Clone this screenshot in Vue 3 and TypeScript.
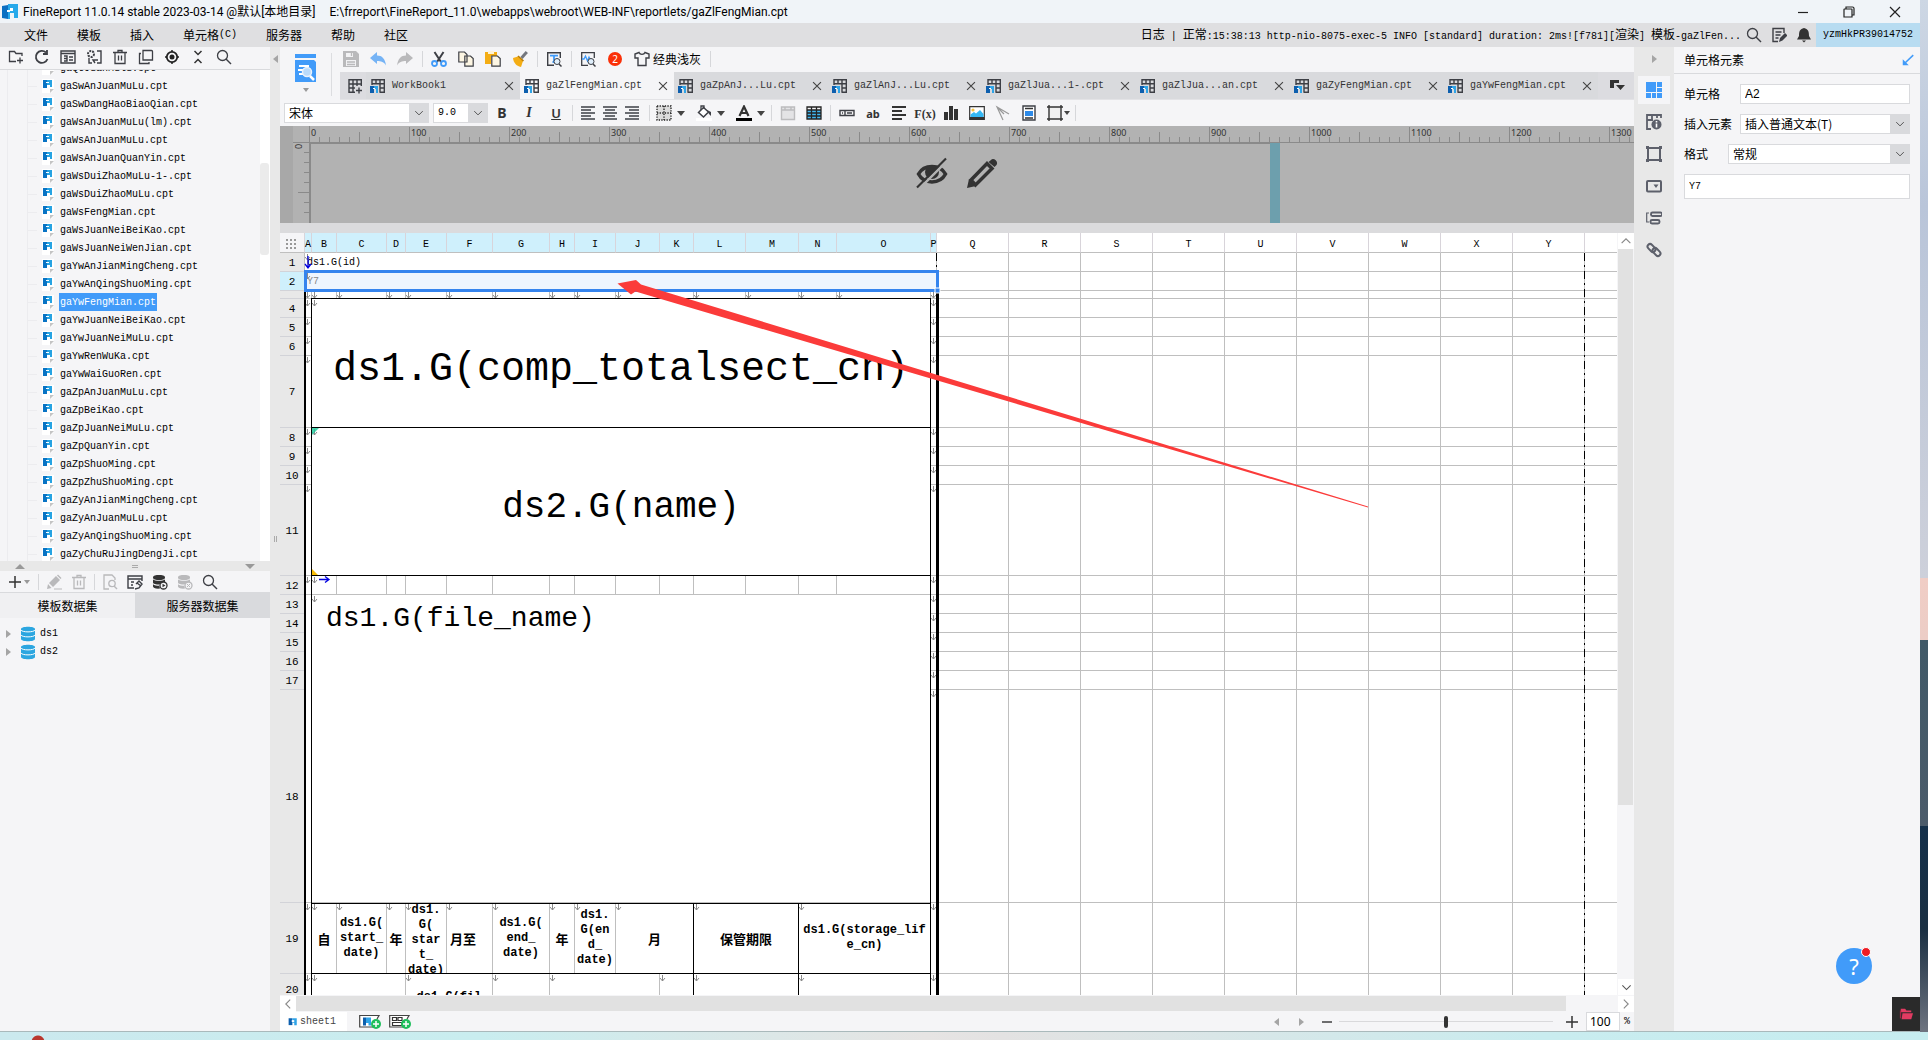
<script setup lang="ts">
import { defineComponent, h, ref } from 'vue'

const ink = '#3d3f45'
const gridGlyph = `<path fill="none" stroke="${ink}" stroke-width="1.4" d="M2 7V1.7h12.3v12.6H9.5M2 5.7h12.3M6 1.7v4M10 1.7v12.6M10 10h4.300"/>`
const logoGlyph = '<path fill="#0d5fae" d="M0 7h4v7H0z"/><path fill="#2fa4e7" d="M4 7h4v7H6v-4H4z"/><path fill="#fff" d="M3 9h2v1H3z"/>'
const dbBase = (c: string) => `<g fill="${c}"><path d="M1 3.500C1 1.500 4 1 7 1s6 .5 6 2.500S10 6 7 6 1 5.500 1 3.500z"/><path d="M1 5.500C3 7.200 11 7.200 13 5.500V8C10 8.500 8 9.500 7.500 10.500 4 10.500 1 10 1 8.500z"/><path d="M1 10.200c1 1 4 1.500 6.300 1.500.1 1.200.4 2 1 2.800C4 15 1 14 1 12.500z"/></g>`

const icons: Record<string, string> = {
  logo: '<path fill="#0a6fc2" d="M0 2l6-1v14l-6-1z"/><path fill="#27a9ea" d="M6 0h10v14h-4V9H8v6H6z"/><path fill="#fff" d="M8 4h3v3H8zM5 6h3v2H5z"/>',
  newdir: `<path fill="none" stroke="${ink}" stroke-width="1.3" d="M14 7V4.500H8L6.500 2.500H1.500v10H8M12 8.500v6M9 11.500h6"/>`,
  refresh: `<path fill="none" stroke="${ink}" stroke-width="1.8" d="M13.500 10A6 6 0 1 1 12 3.500M13 1v4H9"/>`,
  rename: `<path fill="none" stroke="${ink}" stroke-width="1.4" d="M1 2h14v12H1zM1 4.500h14M4 7h3v5H4M4 9.500h3M9 8h4M9 11h4"/>`,
  config: `<path fill="none" stroke="${ink}" stroke-width="1.4" d="M11 2h4v12h-4M3 9v5h3M9 14l-2-3h5"/><circle cx="5" cy="5" r="3" fill="none" stroke="${ink}" stroke-width="2" stroke-dasharray="2 1"/>`,
  trash: `<path fill="none" stroke="currentColor" stroke-width="1.3" d="M1 3.500h14M6 3V1.500h4V3M3 3.500v11h10v-11M6.500 6.500v5M9.500 6.500v5"/>`,
  pages: `<path fill="none" stroke="${ink}" stroke-width="1.300" d="M5 1.500h8.500q1 0 1 1V11H5zM3 4.500H1.500V14.500H11V13"/>`,
  target: '<circle cx="8" cy="8" r="5.200" fill="none" stroke="#222" stroke-width="1.800"/><circle cx="8" cy="8" r="2.500" fill="#222"/><path stroke="#222" stroke-width="1.500" d="M8 1v2M8 13v2M1 8h2M13 8h2"/>',
  collapse: '<path fill="none" stroke="#333" stroke-width="1.500" d="M4.500 2L8 5.500 11.500 2M4.500 14L8 10.500 11.500 14"/>',
  search: `<circle cx="6.500" cy="6.500" r="5" fill="none" stroke="${ink}" stroke-width="1.300"/><path stroke="${ink}" stroke-width="1.400" d="M10 10l5 5"/>`,
  file: '<path fill="#fff" d="M2 1h12v11l-3 3H2z"/><path fill="#c4c4c4" d="M14 11l-4 4v-4z"/><path fill="#0873c4" d="M3 2h4v8H3z"/><path fill="#27a3e2" d="M7 2h5v7h-2V7H7z"/><path fill="#fff" d="M6 4h3v1H6z"/>',
  sheet: '<path fill="#0d5fae" d="M1 2h6v11H1z"/><path fill="#2fa4e7" d="M7 2h7v11h-4V9H7z"/><path fill="#fff" d="M6 5h4v3H6z"/>',
  big: '<path fill="#419bf9" d="M0 0h21v4H0zM0 6h19l2 2v20H0z"/><path stroke="#fff" stroke-width="2" d="M4 12h10M3 16h5M4 20h4"/><circle cx="12" cy="18" r="4.500" fill="#b9dafa" stroke="#e9f1fb" stroke-width="1.500"/><path stroke="#fff" stroke-width="2.500" d="M15 22l4 4"/>',
  save: '<path fill="#b9b9bb" d="M0 0h13l3 3v13H0z"/><path fill="#f2f2f4" d="M3 2h7v4H3zM3 9h10v6H3z"/><path stroke="#b9b9bb" stroke-width="1.300" d="M4 11h8M4 13.500h8M8.500 2v3"/>',
  undo: '<path fill="#75b3f5" d="M0 7l7-6v3.500c5 0 8 3 9 10-2-3.500-5-4.500-9-4.500V13z"/>',
  redo: '<path fill="#b9b9bb" d="M16 7L9 1v3.500c-5 0-8 3-9 10C2 11 5 10 9 10v3z"/>',
  cut: `<path stroke="${ink}" stroke-width="2" d="M3.500 1l6.500 10M12.500 1L6 11"/><circle cx="3.500" cy="12.500" r="2.500" fill="none" stroke="#419bf9" stroke-width="1.800"/><circle cx="12.500" cy="12.500" r="2.500" fill="none" stroke="#419bf9" stroke-width="1.800"/>`,
  copy: `<path fill="#fdf6e3" stroke="${ink}" stroke-width="1.200" d="M.8 1h5.700L9 3.500V11H.8zM6.800 5h5.700L15.200 7.500V15.200H6.800z"/>`,
  paste: `<path fill="#f4ad14" d="M0 1h12v4H6v8H0z"/><path fill="#fff3d4" d="M3 0h6v3H3z"/><path fill="#fdf6e3" stroke="${ink}" stroke-width="1.200" d="M6.800 5h5.700L15.200 7.500V15.200H6.800z"/>`,
  brush: `<path stroke="#74777e" stroke-width="3" d="M9.500 7L14.800 1"/><path fill="#f4ad14" d="M1 7l5-1.500L11 10l-2 6c-5-1-7.500-4.500-8-9z"/><path stroke="#b97b00" stroke-width="1.500" d="M6 5l5.500 5"/>`,
  find: `<path fill="none" stroke="${ink}" stroke-width="1.400" d="M8 14.300H1.700V1.700h12.600V7"/><path stroke="#419bf9" stroke-width="1.800" d="M4 4.700h8M8 4.700V11M6.500 11h3"/><circle cx="11" cy="10.500" r="3" fill="#dfeefb" stroke="${ink}"/><path stroke="${ink}" stroke-width="1.500" d="M13 13l2.500 2.500"/>`,
  wave: `<path fill="none" stroke="${ink}" stroke-width="1.300" d="M8 14.300H1.700V1.700h12.600V7"/><path fill="none" stroke="#419bf9" stroke-width="1.300" d="M2 8h2l1.500-3L7.500 10 9 6l1 2"/><circle cx="11" cy="10.500" r="3" fill="#dfeefb" stroke="${ink}"/><path stroke="${ink}" stroke-width="1.500" d="M13 13l2.500 2.500"/>`,
  shirt: `<path fill="none" stroke="${ink}" stroke-width="1.400" d="M5 1.500L1 3v4h3v7.500h8V7h3V3l-4-1.500C10 4 6 4 5 1.500z"/>`,
  newtab: `<path fill="none" stroke="${ink}" stroke-width="1.400" d="M8 14.300H2V1.700h12.300V8M2 6h12.300M2 10h6M6 1.700v12.600M10 1.700V8M12 9.500v6M9 12.500h6"/>`,
  book: gridGlyph + `<g transform="translate(0 1)">${logoGlyph}</g>`,
  close: '<path stroke="#444" stroke-width="1.300" d="M3.500 3.500l9 9M12.500 3.500l-9 9"/>',
  more: '<path fill="#333" d="M1 2h9v3H5v5H1zM7 7h9l-4.500 5z"/>',
  left: `<path stroke="${ink}" stroke-width="1.500" d="M1 2h14M1 5h10M1 8h14M1 11h10M1 14h14"/>`,
  center: `<path stroke="${ink}" stroke-width="1.500" d="M1 2h14M3 5h10M1 8h14M3 11h10M1 14h14"/>`,
  right: `<path stroke="${ink}" stroke-width="1.500" d="M1 2h14M5 5h10M1 8h14M5 11h10M1 14h14"/>`,
  border: '<path fill="#dcdcdc" d="M1 1h14v14H1z"/><path fill="none" stroke="#222" stroke-width="1.300" stroke-dasharray="1.300 1.300" d="M1 1h14v14H1zM8 1v14M1 8h14"/>',
  fill: `<path fill="#fff" stroke="${ink}" stroke-width="1.500" d="M2.500 7.500l5-5 5 4.500-5 5z"/><path fill="none" stroke="${ink}" stroke-width="1.300" d="M5 5V1h3v3"/><path fill="${ink}" d="M11 5l4 2v4l-2-2z"/><path fill="#fff" d="M0 13h16v3H0z"/>`,
  color: '<path fill="none" stroke="#333" stroke-width="2.200" d="M3.500 11L8 1.500 12.500 11M5 8h6"/><path fill="#000" d="M0 13h16v3H0z"/>',
  merge: '<path fill="#e3e3e5" stroke="#bcbcbe" stroke-width="1.400" d="M1.500 2h13v12.500h-13zM1.500 5h13M5 2v3M11 2v3"/>',
  cells: '<path fill="#41b7f0" d="M1 5h14v9H1z"/><path fill="none" stroke="#222" stroke-width="1.300" d="M1 2h14v12H1zM1 5h14M1 8h14M1 11h14M5.500 2v12M10.500 2v12"/>',
  field: `<path fill="none" stroke="${ink}" stroke-width="1.400" d="M1 5.500h14v5H1zM6 5.500v5M3 8h1M8 8h5"/>`,
  lines: '<path stroke="#333" stroke-width="2" d="M1 2h14M1 6h10M1 10h14M1 14h10"/>',
  bars: '<path fill="#333" d="M1 7h4v8H1zM6 1h4v14H6zM11 4h4v11h-4z"/>',
  image: '<path fill="#fff" stroke="#333" stroke-width="1.200" d="M.7 1.700h14.600v12.600H.7z"/><path fill="#35b8f5" d="M1.500 12V9.500L5 7l2 1.500L11 5l3.500 4V12z"/><circle cx="4" cy="5" r="1.600" fill="#f6c244"/><path fill="#333" d="M.5 12h15v2.500H.5z"/>',
  pointer: '<path fill="none" stroke="#999" stroke-width="1.200" d="M8 15L2 2l12 7M2 2l7 7"/>',
  doc: `<path fill="#fff" stroke="${ink}" stroke-width="1.400" d="M2 1h12v14H2z"/><path stroke="#333" stroke-width="1.300" d="M4 3.500h8M4 13h8"/><path fill="#2d8ae8" d="M4 6h8v5H4z"/><path stroke="#fff" d="M4 5.500h8"/>`,
  rect: '<path fill="#f0f0f0" stroke="#333" stroke-width="1.400" d="M2 2h12v12H2zM0 2h16M0 14h16M2 0v16M14 0v16"/>',
  pencil: '<path fill="#b9b9bb" d="M1 15l1-5 3.500 4zM3 9l7-7 4 4-7 7zM11 1.500l1-1 3.500 3.500-1 1z"/><path stroke="#b9b9bb" d="M8 15h8"/>',
  page: '<path fill="none" stroke="#b9b9bb" stroke-width="1.300" d="M13 6V4l-3-3H2v14h5"/><circle cx="10" cy="9.500" r="3.200" fill="none" stroke="#b9b9bb" stroke-width="1.300"/><path stroke="#b9b9bb" stroke-width="1.400" d="M12 12l3 3"/>',
  dsedit: `<path fill="none" stroke="${ink}" stroke-width="1.400" d="M15 7V2H1v12h6M1 5h14M4 8h3M4 11h2"/><path fill="none" stroke="${ink}" stroke-width="1.400" d="M9 10l3-3 3 3-3 4-4 1M10 9l4 3"/>`,
  dbplay: dbBase('#333') + '<circle cx="11.500" cy="11.500" r="3.500" fill="#f5f5f7" stroke="#333" stroke-width="1.300"/><path fill="#333" d="M10.500 9.700l3 1.800-3 1.800z"/>',
  dbstop: dbBase('#b9b9bb') + '<circle cx="11.500" cy="11.500" r="3.500" fill="#f5f5f7" stroke="#b9b9bb" stroke-width="1.300"/><path stroke="#b9b9bb" d="M10 10l3 3M13 10l-3 3"/>',
  db: '<path fill="#2ca6e0" d="M1 3c0-3 14-3 14 0v10c0 3-14 3-14 0z"/><path fill="none" stroke="#fff" d="M1 4c1 2.500 13 2.500 14 0M1 9c1 2.500 13 2.500 14 0"/>',
  eyeoff: '<path fill="none" stroke="#333" stroke-width="3.500" d="M2.500 17C8 7 24 7 29.500 17 24 27.500 8 27.500 2.500 17z"/><circle cx="16" cy="15" r="7" fill="#333"/><path stroke="#b2b2b2" stroke-width="2.500" d="M3 32L32 3"/><path stroke="#333" stroke-width="2.200" d="M1 30.500L30 1.500"/>',
  edit: '<path fill="#333" d="M1 31l2-9 7 7zM25 3c2-3 8 1 5.500 5l-2 2-6-5z"/><path fill="none" stroke="#333" stroke-width="3.500" d="M5 23L21 6.500l5 5L9.500 28z"/>',
  cellel: '<path fill="#419bf9" d="M0 0h10v10H0zM11 0h5v5h-5zM11 6h5v4h-5zM0 11h5v5H0zM6 11h4v5H6zM11 11h5v5h-5z"/>',
  cellattr: '<path fill="none" stroke="#5d606b" stroke-width="1.800" d="M5 15H1V1h14v3M1 6h6M6 1v4M11 1v3"/><circle cx="10.500" cy="10.500" r="5" fill="#5d606b"/><path stroke="#fff" stroke-width="1.600" d="M10.500 7v1.500M10.500 9.500v4"/>',
  frame: '<path fill="none" stroke="#5d606b" stroke-width="2" d="M2 2h12v12H2z"/><path fill="#5d606b" d="M0 0h3v3H0zM13 0h3v3h-3zM0 13h3v3H0zM13 13h3v3h-3z"/>',
  widget: '<rect x="1" y="3" width="14" height="10.500" rx="1" fill="none" stroke="#5d606b" stroke-width="2"/><path fill="#5d606b" d="M7.500 6.500h5l-2.500 3.500z"/>',
  cond: '<path fill="none" stroke="#5d606b" stroke-width="1.200" d="M3 3H.7v9H3"/><rect x="5" y="2.500" width="11" height="3.500" rx="1.500" fill="none" stroke="#5d606b" stroke-width="1.900"/><rect x="4.500" y="10" width="9" height="3.500" rx="1.500" fill="none" stroke="#5d606b" stroke-width="1.900"/>',
  link: '<g fill="none" stroke="#5d606b" stroke-width="2"><rect x="1" y="3.500" width="9" height="5" rx="2.500" transform="rotate(45 5.500 6)"/><rect x="6" y="7.500" width="9" height="5" rx="2.500" transform="rotate(45 10.500 10)"/></g>',
  note: `<path fill="none" stroke="${ink}" stroke-width="1.400" d="M13 6V1.500H2v13h5M4.500 5h6M4.500 8h5M4.500 11h3"/><path fill="${ink}" d="M8 15l1-4 5-5 2.500 2.500-5 5z"/>`,
  bell: '<path fill="#333" d="M8 1c4 1 5 3 5 8l2 3.500H1L3 9c0-5 1-7 5-8zM6 13.500h4L8 15.500z"/>',
  min: '<path stroke="#222" stroke-width="1.200" d="M3 8.500h10"/>',
  restore: '<path fill="none" stroke="#222" stroke-width="1.200" d="M3 5.500q0-.5.500-.5h7q.5 0 .5.500v7.500H3zM5 5V3h6.500Q13 3 13 4.500V11h-2"/>',
  quit: '<path stroke="#222" stroke-width="1.200" d="M3 3l10 10M13 3L3 13"/>',
  dock: '<path fill="#419bf9" d="M1 15V7l8 8z"/><path stroke="#419bf9" stroke-width="2" d="M4 12L15 1.500"/>',
  minus: '<path stroke="#333" stroke-width="1.400" d="M3 8h10"/>',
  plus: '<path stroke="#333" stroke-width="1.500" d="M2 8h12M8 2v12"/>',
  up: '<path fill="none" stroke="#888" stroke-width="1.300" d="M3 10.500l5-5 5 5"/>',
  down: '<path fill="none" stroke="#555" stroke-width="1.600" d="M2 5l6 6 6-6"/>',
  prev: '<path fill="none" stroke="#888" stroke-width="1.300" d="M10.500 3l-5 5 5 5"/>',
  next: '<path fill="none" stroke="#888" stroke-width="1.300" d="M5.500 3l5 5-5 5"/>',
  addsheet: '<path fill="#fff" stroke="#444" stroke-width="1.200" d="M14 13H.7V1.500H20L18 5"/><path fill="#0d5fae" d="M4 3.500h3v8H4z"/><path fill="#2fa4e7" d="M7 3.500h5v8H9.500V9H7z"/><circle cx="17" cy="10" r="5" fill="#1fbf5c"/><path stroke="#fff" stroke-width="1.500" d="M14 10h6M17 7v6"/>',
  addpoly: '<path fill="#fff" stroke="#444" stroke-width="1.200" d="M14 13H.7V1.500H20L18 5"/><path fill="none" stroke="#333" stroke-width="1.200" d="M3.500 3.500h4v3h-4zM9 3.500h4v3H9zM3.500 8.500H13v3H3.500z"/><circle cx="17" cy="10" r="5" fill="#1fbf5c"/><path stroke="#fff" stroke-width="1.500" d="M14 10h6M17 7v6"/>',
  folder: '<path fill="#e23b62" d="M2 2h5l1.500 2H14v2H2z"/><path fill="#e23b62" d="M4 7h12l-2 7H3z"/><path fill="#a02545" d="M1 4h1.500v9H1z"/>',
}

const Icon = defineComponent({
  props: { name: { type: String, required: true }, box: { type: String, default: '0 0 16 16' } },
  setup: (p) => () => h('svg', { class: 'ic', viewBox: p.box, 'aria-hidden': 'true', innerHTML: icons[p.name] }),
})

const menus = ['文件', '模板', '插入', '单元格', '服务器', '帮助', '社区']
const treeTools = ['newdir', 'refresh', 'rename', 'config', 'trash', 'pages', 'target', 'collapse', 'search']
const files = [
  'gaQtJuanMulu', 'gaSwAnJuanMuLu', 'gaSwDangHaoBiaoQian', 'gaWsAnJuanMuLu(lm)', 'gaWsAnJuanMuLu', 'gaWsAnJuanQuanYin',
  'gaWsDuiZhaoMuLu-1-', 'gaWsDuiZhaoMuLu', 'gaWsFengMian', 'gaWsJuanNeiBeiKao', 'gaWsJuanNeiWenJian', 'gaYwAnJianMingCheng',
  'gaYwAnQingShuoMing', 'gaYwFengMian', 'gaYwJuanNeiBeiKao', 'gaYwJuanNeiMuLu', 'gaYwRenWuKa', 'gaYwWaiGuoRen',
  'gaZpAnJuanMuLu', 'gaZpBeiKao', 'gaZpJuanNeiMuLu', 'gaZpQuanYin', 'gaZpShuoMing', 'gaZpZhuShuoMing',
  'gaZyAnJianMingCheng', 'gaZyAnJuanMuLu', 'gaZyAnQingShuoMing', 'gaZyChuRuJingDengJi',
].map((n) => n + '.cpt')
const current = ref('gaYwFengMian.cpt')

const mainTools = ['save', 'undo', 'redo', '|', 'cut', 'copy', 'paste', 'brush', '|', 'find', '|', 'wave']
const tabs = ['WorkBook1', 'gaZlFengMian.cpt', 'gaZpAnJ...Lu.cpt', 'gaZlAnJ...Lu.cpt', 'gaZlJua...1-.cpt', 'gaZlJua...an.cpt', 'gaZyFengMian.cpt', 'gaYwFengMian.cpt']
const activeTab = ref(1)
const rail = ['cellel', 'cellattr', 'frame', 'widget', 'cond', 'link']

const hticks = Array.from({ length: 200 }, (_, i) => i)
const vticks = [1, 2, 3, 4, 5, 6, 7]

const colWidths = [7, 25, 50, 19, 41, 46, 57, 25, 41, 44, 34, 52, 53, 38, 94, 6, ...Array(9).fill(72)] as number[]
const letters = 'ABCDEFGHIJKLMNOPQRSTUVWXY'.split('')
const rowHeights = [19, 19, 8, 19, 19, 19, 72, 19, 19, 19, 91, 19, 19, 19, 19, 19, 19, 213, 71, 32]

interface Cell { span?: number; rows?: number; cls?: string; lines?: string[]; cjk?: boolean }
const many = (n: number): Cell[] => Array.from({ length: n }, () => ({}))
const rest = many(10)
const edge = (): Cell[] => [{}, {}, ...rest]
const cells: Cell[][] = [
  [{ span: 16, cls: 'small', lines: ['ds1.G(id)'] }, ...rest],
  [{ span: 16, cls: 'small sel', lines: ['Y7'] }, ...rest],
  [...many(16), ...rest],
  [{}, { span: 14, rows: 4, cls: 'huge', lines: ['ds1.G(comp_totalsect_cn)'] }, {}, ...rest],
  edge(), edge(), edge(),
  [{}, { span: 14, rows: 4, cls: 'large', lines: ['ds2.G(name)'] }, {}, ...rest],
  edge(), edge(), edge(),
  [...many(16), ...rest],
  [{ rows: 6 }, { span: 14, rows: 6, cls: 'medium', lines: ['ds1.G(file_name)'] }, {}, ...rest],
  [{}, ...rest], [{}, ...rest], [{}, ...rest], [{}, ...rest], [{}, ...rest],
  [
    {}, { cjk: true, lines: ['自'] }, { lines: ['ds1.G(', 'start_', 'date)'] }, { cjk: true, lines: ['年'] },
    { lines: ['ds1.', 'G(', 'star', 't_', 'date)'] }, { cjk: true, lines: ['月至'], cls: 'near' }, { lines: ['ds1.G(', 'end_', 'date)'] },
    { cjk: true, lines: ['年'] }, { lines: ['ds1.', 'G(en', 'd_', 'date)'] }, { span: 2, cjk: true, lines: ['月'] },
    { span: 2, cjk: true, lines: ['保管期限'] }, { span: 2, lines: ['ds1.G(storage_lif', 'e_cn)'] }, {}, ...rest,
  ],
  [{}, { span: 3 }, { span: 2, cls: 'low', lines: ['ds1.G(fil'] }, {}, { span: 3 }, {}, { span: 2 }, { span: 2 }, {}, ...rest],
]

/* column and row origins inside the sheet, after the 25px row header and 20px column header */
const xs = colWidths.reduce<number[]>((a, w) => [...a, a[a.length - 1] + w], [25])
const ys = rowHeights.reduce<number[]>((a, w) => [...a, a[a.length - 1] + w], [20])
const markRows: Record<number, string> = {
  1: 'A', 2: 'A', 3: 'ABCDEFGHIJKLMNOP', 4: 'ABP', 5: 'AP', 6: 'AP', 7: 'AP', 8: 'ABP', 9: 'AP', 10: 'AP', 11: 'AP', 12: 'ABP',
  13: 'BP', 14: 'P', 15: 'P', 16: 'P', 17: 'P', 18: 'P', 19: 'ABCDEFGHIJLNP', 20: 'ABEGHKLNP',
}
const marks = Object.entries(markRows).flatMap(([r, cols]) =>
  cols.split('').map((c) => `M${xs[letters.indexOf(c)] + 2.5} ${ys[+r - 1] + 1}v6m-2.500 -3l2.500 3l2.500 -3`),
).join('')

const zoomLevel = ref(50)
</script>

<template>
  <div class="desk">
    <div class="upper">
      <div class="app">
        <header class="title">
          <Icon name="logo" />
          <span>FineReport 11.0.14 stable 2023-03-14 @默认[本地目录]</span>
          <span class="path">E:\frreport\FineReport_11.0\webapps\webroot\WEB-INF\reportlets/gaZlFengMian.cpt</span>
          <span class="grow"></span>
          <button v-for="b in ['min', 'restore', 'quit']" :key="b" class="win" :aria-label="b"><Icon :name="b" /></button>
        </header>

        <nav class="menu">
          <button v-for="m in menus" :key="m">{{ m }}<span v-if="m === '单元格'" class="lat">(C)</span></button>
          <span class="grow"></span>
          <p class="log">日志<span class="lat">&nbsp;|&nbsp;</span>正常<span class="lat">:15:38:13 http-nio-8075-exec-5 INFO [standard] duration: 2ms![f781][</span>渲染<span class="lat">] </span>模板<span class="lat">-gaZlFen...</span></p>
          <div class="tray">
            <button v-for="b in ['search', 'note', 'bell']" :key="b" :aria-label="b"><Icon :name="b" /></button>
          </div>
          <span class="user">yzmHkPR39014752</span>
        </nav>

        <div class="work">
          <aside class="left">
            <div class="tools tree-tools">
              <button v-for="t in treeTools" :key="t" :aria-label="t"><Icon :name="t" /></button>
            </div>
            <div class="tree">
              <ul>
                <li v-for="f in files" :key="f" :class="{ on: f === current }" @click="current = f">
                  <Icon name="file" /><span>{{ f }}</span>
                </li>
              </ul>
              <div class="tree-bar"><i></i></div>
            </div>
            <div class="splitter"><i class="tri-up"></i><i class="grip"></i><i class="tri-down"></i></div>
            <div class="tools ds-tools">
              <button aria-label="add"><Icon name="plus" /></button><i class="caret pale"></i>
              <i class="sep"></i>
              <button aria-label="edit"><Icon name="pencil" /></button>
              <button class="pale-ink" aria-label="delete"><Icon name="trash" /></button>
              <i class="sep"></i>
              <button v-for="t in ['page', 'dsedit', 'dbplay', 'dbstop', 'search']" :key="t" :aria-label="t"><Icon :name="t" /></button>
            </div>
            <div class="ds-tabs">
              <button class="on">模板数据集</button><button>服务器数据集</button>
            </div>
            <ul class="ds">
              <li v-for="d in ['ds1', 'ds2']" :key="d"><i class="tri-right"></i><Icon name="db" /><span>{{ d }}</span></li>
            </ul>
          </aside>

          <div class="divider"><i class="tri-left"></i><i class="grip2"></i></div>

          <main class="main">
            <div class="head">
              <button class="preview" aria-label="preview"><Icon name="big" box="0 0 21 28" /><i class="caret pale"></i></button>
              <i class="tall-sep"></i>
              <div class="head-right">
                <div class="tools row1">
                  <template v-for="(t, i) in mainTools" :key="i">
                    <i v-if="t === '|'" class="sep"></i>
                    <button v-else :aria-label="t"><Icon :name="t" /></button>
                  </template>
                  <button class="badge">2</button>
                  <button class="skin"><Icon name="shirt" />经典浅灰</button>
                  <i class="sep"></i>
                </div>
                <div class="tabs">
                  <button class="newtab" aria-label="new"><Icon name="newtab" /></button>
                  <div v-for="(t, i) in tabs" :key="t" class="tab" :class="{ on: i === activeTab }" @click="activeTab = i">
                    <Icon name="book" /><span>{{ t }}</span><button aria-label="close"><Icon name="close" /></button>
                  </div>
                  <button class="moretabs" aria-label="more"><Icon name="more" /></button>
                </div>
              </div>
            </div>

            <div class="tools row2">
              <div class="combo font"><select aria-label="font"><option>宋体</option></select><Icon name="down" /></div>
              <div class="combo size"><select aria-label="size"><option>9.0</option></select><Icon name="down" /></div>
              <div class="group biu">
                <button><b>B</b></button><button><em>I</em></button><button><u>U</u></button>
              </div>
              <i class="sep"></i>
              <div class="group tight">
                <button v-for="t in ['left', 'center', 'right']" :key="t" :aria-label="t"><Icon :name="t" /></button>
              </div>
              <i class="sep"></i>
              <div class="group drop">
                <template v-for="t in ['border', 'fill', 'color']" :key="t">
                  <button :aria-label="t"><Icon :name="t" /><i class="caret"></i></button>
                </template>
              </div>
              <i class="sep"></i>
              <div class="group wide">
                <button v-for="t in ['merge', 'cells']" :key="t" :aria-label="t"><Icon :name="t" /></button>
              </div>
              <i class="sep"></i>
              <div class="group wide">
                <button aria-label="field"><Icon name="field" /></button>
                <button class="word">ab</button>
                <button aria-label="lines"><Icon name="lines" /></button>
                <button class="word fx">F(x)</button>
                <button v-for="t in ['bars', 'image', 'pointer', 'doc']" :key="t" :aria-label="t"><Icon :name="t" /></button>
                <button class="rectbtn" aria-label="rect"><Icon name="rect" /><i class="caret tiny"></i></button>
              </div>
              <i class="sep"></i>
            </div>

            <div class="design">
              <svg class="ruler" aria-hidden="true">
                <rect width="13" height="97" fill="#a8a8a8" />
                <g fill="#8a8a8a">
                  <rect y="16" x="13" width="100%" height="1" />
                  <rect x="29" width="1" height="97" />
                  <rect v-for="t in hticks" :key="t" :x="29 + t * 10" :y="t % 10 === 0 ? 1 : t % 5 === 0 ? 6 : 11" :height="t % 10 === 0 ? 15 : t % 5 === 0 ? 10 : 5" width="1" />
                  <rect v-for="t in vticks" :key="'v' + t" :y="16 + t * 10" :x="t === 5 ? 18 : 24" :width="t === 5 ? 11 : 5" height="1" />
                  <rect x="30" y="17" width="961" height="1" />
                  <rect x="30" y="17" width="1" height="80" />
                </g>
                <rect x="990" y="17" width="10" height="80" fill="#6d9fad" />
                <g class="nums">
                  <text v-for="n in 14" :key="n" :x="(n - 1) * 100 + 31" y="10">{{ (n - 1) * 100 }}</text>
                  <text transform="translate(15 23) rotate(-90)" x="0" y="7">0</text>
                </g>
              </svg>
              <div class="veil-actions">
                <button aria-label="hide"><Icon name="eyeoff" box="0 0 32 32" /></button>
                <button aria-label="edit"><Icon name="edit" box="0 0 32 32" /></button>
              </div>
            </div>

            <div class="sheet-area">
              <div class="sheet">
                <table>
                  <colgroup>
                    <col class="c-head" />
                    <col v-for="(w, i) in colWidths" :key="i" :style="{ width: w + 'px' }" />
                    <col />
                  </colgroup>
                  <thead>
                    <tr>
                      <th class="corner"><svg viewBox="0 0 12 10"><path stroke="#999" stroke-width="2" stroke-dasharray="2 2" d="M0 1h11M0 5h11M0 9h11" /></svg></th>
                      <th v-for="(l, i) in letters" :key="l" :class="{ used: i < 16 }"><span>{{ l }}</span></th>
                      <th class="last"></th>
                    </tr>
                  </thead>
                  <tbody>
                    <tr v-for="(r, ri) in cells" :key="ri" :style="{ height: rowHeights[ri] + 'px' }">
                      <th :class="{ used: ri === 1 }"><template v-if="ri !== 2">{{ ri + 1 }}</template></th>
                      <td v-for="(c, ci) in r" :key="ci" :colspan="c.span" :rowspan="c.rows" :class="[c.cls, { cjk: c.cjk, txt: c.lines && !c.cls?.match(/small|huge|large|medium/), last: ci === r.length - 1 }]">
                        <div v-if="c.lines"><template v-for="(l, li) in c.lines" :key="li"><br v-if="li" />{{ l }}</template></div>
                      </td>
                    </tr>
                  </tbody>
                </table>
                <svg class="over" aria-hidden="true">
                  <path :d="marks" fill="none" stroke="#8a8a8a" />
                  <path d="M32 195h7l-7 7z" fill="#18c99a" opacity=".8" />
                  <path d="M32 336v6h6z" fill="#f8bd07" />
                  <path d="M28 23v11m-3-3l3 4 3-4M39 346.500h10m-4-3l4 3-4 3" fill="none" stroke="#0000e0" stroke-width="1.300" />
                  <g fill="#000">
                    <rect x="24" y="58" width="2" height="1200" />
                    <rect x="656" y="58" width="3" height="1200" />
                    <rect x="31" y="65" width="1" height="1200" />
                    <rect x="650" y="65" width="1" height="1200" />
                    <rect v-for="y in [65, 194, 342, 670, 740]" :key="y" x="31" :y="y" width="620" height="1" />
                    <rect v-for="x in [413, 518]" :key="x" :x="x" y="670" width="1" height="500" />
                  </g>
                  <path d="M1304.500 20v1200M656.500 20v18" stroke="#000" stroke-dasharray="8 4 2 4" />
                  <rect x="25.500" y="38.500" width="632" height="19" fill="none" stroke="#3584ee" stroke-width="3" />
                  <rect x="655" y="55" width="5" height="5" fill="#3584ee" stroke="#fff" stroke-width="1" />
                  <path d="M337.500 50.500L356 47l5 4.500L1088 273.500v1L355.500 58.500 351 61.500z" fill="#fb3b3a" />
                </svg>
              </div>
              <div class="vbar"><button aria-label="up"><Icon name="up" /></button><i></i><button aria-label="down"><Icon name="down" /></button></div>
            </div>

            <div class="hbar"><button aria-label="left"><Icon name="prev" /></button><i></i><button aria-label="right"><Icon name="next" /></button></div>

            <footer class="foot">
              <button class="sheet-tab"><Icon name="sheet" />sheet1</button>
              <button class="add" aria-label="add sheet"><Icon name="addsheet" box="0 0 22 16" /></button>
              <button class="add" aria-label="add poly"><Icon name="addpoly" box="0 0 22 16" /></button>
              <span class="grow"></span>
              <i class="tri-left nav"></i><i class="tri-right nav"></i>
              <button aria-label="zoom out"><Icon name="minus" /></button>
              <input v-model="zoomLevel" class="slide" type="range" aria-label="zoom" />
              <button aria-label="zoom in"><Icon name="plus" /></button>
              <input class="pct" value="100" aria-label="zoom percent" /><span class="lat unit">%</span>
            </footer>
          </main>

          <div class="rail">
            <i class="tri-right nav"></i>
            <button v-for="(r, i) in rail" :key="r" :class="{ on: i === 0 }" :aria-label="r"><Icon :name="r" /></button>
          </div>

          <aside class="props">
            <h2>单元格元素<Icon name="dock" /></h2>
            <div class="field"><label for="cell">单元格</label><input id="cell" value="A2" /></div>
            <div class="field"><label for="ins">插入元素</label><div class="combo"><select id="ins"><option>插入普通文本(T)</option></select><Icon name="down" /></div></div>
            <div class="field short"><label for="fmt">格式</label><div class="combo"><select id="fmt"><option>常规</option></select><Icon name="down" /></div></div>
            <input class="value" value="Y7" aria-label="value" />
          </aside>
        </div>
        <button class="help">?<i></i></button>
        <button class="tray-box" aria-label="folder"><Icon name="folder" /></button>
      </div>
      <div class="wall"></div>
    </div>
    <div class="taskbar"></div>
  </div>
</template>

<style>
body { margin: 0; }
</style>

<style scoped>
* { box-sizing: border-box; }
.desk {
  --bg: #f5f5f7;
  --mono: "Liberation Mono", "Noto Sans CJK SC", monospace;
  --cjk: "Noto Sans CJK SC", sans-serif;
  height: 100vh; display: flex; flex-direction: column; overflow: hidden;
  font: 12px/16px var(--cjk); color: #000; background: var(--bg);
}
button { border: 0; padding: 0; margin: 0; background: none; font: inherit; color: inherit; display: flex; align-items: center; justify-content: center; flex: none; }
ul { list-style: none; margin: 0; padding: 0; }
p, h2 { margin: 0; font: inherit; }
input, select { font: inherit; color: #000; margin: 0; outline: 0; border-radius: 0; }
.ic { width: 16px; height: 16px; display: block; flex: none; }
.grow { flex: 1; }
.lat { font-family: var(--mono); font-size: 10px; white-space: pre; }
.upper { flex: 1; display: flex; min-height: 0; }
.app { flex: 1; min-width: 0; display: flex; flex-direction: column; position: relative; border-bottom: 1px solid #a9b9bb; }
.wall { width: 8px; background: linear-gradient(#cdd7e4, #b9c5d9 20%, #cdd0da 56%, #f0cdc5 56%, #eccdc6 62%, #405967 62%, #4b5b6a 80%, #14304a 80%, #1a2f42 90%, #6e7480); }
.taskbar { height: 8px; background: radial-gradient(circle at 38px 10px, #b9372d 6px, transparent 7px), linear-gradient(90deg, #cbe9ee, #c9edef 25%, #e6e4e3 48%, #e3e2e2 52%, #c9ecef 80%, #c6edf0); }

.title { height: 23px; display: flex; align-items: center; padding-left: 2px; background: #f0f4f8; font: 12px/16px Roboto, "Noto Sans CJK SC", sans-serif; white-space: nowrap; }
.title .ic { margin-right: 5px; }
.title .path { margin-left: 14px; }
.title .win { width: 46px; height: 20px; }
.title .win .ic { margin: 0; }
.title .win:last-child { margin-right: 2px; }

.menu { height: 24px; background: #dfdfe1; display: flex; align-items: center; padding-left: 24px; white-space: nowrap; }
.menu > button { margin-right: 29px; }
.tray { display: flex; gap: 9px; margin: 0 4px 0 5px; }
.user { width: 104px; height: 24px; background: #b8dcf1; display: flex; align-items: center; justify-content: center; font: 10px/16px var(--mono); }

.work { flex: 1; display: flex; min-height: 0; }
.left { width: 270px; flex: none; display: flex; flex-direction: column; }
.tools { display: flex; align-items: center; flex: none; color: #3d3f45; }
.tools .ic { width: 16px; height: 16px; }
.sep { width: 1px; height: 16px; background: #d6d7da; flex: none; }
.tree-tools { height: 23px; padding: 0 8px 2px; gap: 10px; border-bottom: 1px solid #d9dadd; }
.tree { height: 491px; display: flex; overflow: hidden; flex: none; }
.tree ul { flex: 1; margin-top: -11px; background: linear-gradient(#ececef, #ececef) 7px 0 / 1px 100% no-repeat, linear-gradient(#ececef, #ececef) 27px 0 / 1px 100% no-repeat; }
.tree li { display: flex; align-items: center; height: 18px; padding-left: 40px; font: 10px/18px var(--mono); white-space: nowrap; background: linear-gradient(#ececef, #ececef) 28px 9px / 9px 1px no-repeat; }
.tree li span { margin-left: 3px; padding: 1px 1px 0; line-height: 17px; }
.tree li.on span { background: #419bf9; color: #fff; }
.tree-bar { width: 10px; background: #fff; }
.tree-bar i { display: block; margin-top: 93px; height: 92px; width: 9px; border-radius: 3px; background: #ebebeb; }
.splitter { height: 10px; background: #e8e8e8; display: flex; align-items: center; justify-content: space-between; padding: 0 15px; flex: none; }
.tri-up, .tri-down { border: 5px solid transparent; border-top-width: 0; border-bottom: 5px solid #999; }
.tri-down { border-bottom-width: 0; border-top: 5px solid #999; border-bottom-color: transparent; }
.grip { width: 6px; height: 3px; border: solid #aaa; border-width: 1px 0; }
.ds-tools { height: 22px; border-bottom: 1px solid #d9dadd; padding: 0 7px; gap: 9px; }
.ds-tools .caret { margin: 0 1px 0 -8px; }
.ds-tools .sep { margin: 0 -2px; }
.pale-ink { color: #b9b9bb; }
.caret { border: 4px solid transparent; border-top: 5px solid #444; border-bottom-width: 0; flex: none; }
.caret.pale { border-top-color: #999; border-left-width: 3px; border-right-width: 3px; border-top-width: 4px; }
.caret.tiny { border-left-width: 3px; border-right-width: 3px; border-top-width: 4px; }
.ds-tabs { display: flex; height: 25px; flex: none; }
.ds-tabs button { flex: 1; background: #d9dadd; }
.ds-tabs .on { background: #f0f0f2; }
.ds { padding-top: 7px; }
.ds li { display: flex; align-items: center; height: 18px; padding-left: 6px; font: 10px/18px var(--mono); }
.ds .ic { margin: 0 4px 0 9px; }
.tri-right { border: 4px solid transparent; border-left: 5px solid #a5a5a5; border-right-width: 0; }
.tri-left { border: 4px solid transparent; border-right: 5px solid #a5a5a5; border-left-width: 0; }

.divider { width: 10px; flex: none; background: #e8e8e8; display: flex; flex-direction: column; align-items: center; padding-top: 8px; }
.grip2 { margin-top: 473px; width: 3px; height: 6px; border: solid #aaa; border-width: 0 1px; }
.main { flex: 1; min-width: 0; display: flex; flex-direction: column; }
.head { display: flex; height: 53px; flex: none; }
.preview { width: 51px; flex-direction: column; justify-content: flex-start; padding-top: 7px; gap: 6px; }
.preview .ic { width: 21px; height: 28px; }
.tall-sep { width: 1px; margin: 6px 8px 4px 0; background: #dcdde0; }
.head-right { flex: 1; min-width: 0; }
.row1 { height: 25px; padding: 0 0 2px 3px; gap: 11px; }
.row1 .sep { margin: 0 -3px 0 -2px; }
.badge { width: 14px; height: 14px; border-radius: 7px; background: #fa3008; color: #fff; font: 10px/14px "Noto Sans", sans-serif; margin: 0 1px; }
.skin { gap: 3px; color: #000; }
.tabs { display: flex; height: 28px; background: #dcdce0; border-bottom: 1px solid #e3e3e6; color: #333; }
.newtab { width: 26px; padding-left: 3px; }
.tab { width: 154px; display: flex; align-items: center; padding: 0 4px; background: #d9dadd; font: 10px/16px var(--mono); cursor: default; }
.tab span { flex: 1; margin-left: 6px; padding-top: 1px; }
.tab.on { background: var(--bg); }
.newtab .ic, .tab .ic { width: 16px; height: 16px; }
.tab button .ic { width: 14px; height: 14px; }
.moretabs { margin-left: 11px; }
.row2 { height: 26px; padding-left: 4px; }
.combo { display: flex; align-items: stretch; height: 20px; border: 1px solid #d9dadd; background: #d9dadd; position: relative; }
.combo select { flex: 1; min-width: 0; appearance: none; border: 0; background: linear-gradient(90deg, #fff calc(100% - 19px), #d9dadd 0); padding: 0 22px 0 4px; }
.combo .ic { position: absolute; right: 4px; top: 4px; width: 10px; height: 10px; }
.font { width: 145px; margin-right: 4px; }
.size { width: 55px; }
.size select { font: 10px/16px var(--mono); }
.group { display: flex; align-items: center; }
.biu { gap: 11px; margin: 0 8px 0 6px; }
.biu button { width: 16px; font: 14px/18px "Noto Sans", sans-serif; color: #333; }
.biu em { font-family: "Liberation Serif", serif; font-weight: bold; }
.biu u { font-weight: 600; font-size: 13px; }
.tight { gap: 6px; margin: 0 9px 0 7px; }
.drop { gap: 11px; margin: 0 6px; }
.drop button { gap: 5px; width: 29px; justify-content: flex-start; }
.wide { gap: 10px; margin: 0 8px; }
.word { width: 16px; font: bold 11px/16px "Noto Sans", sans-serif; color: #333; padding-top: 1px; }
.fx { font: bold 12px/16px "Liberation Serif", serif; }
.rectbtn { gap: 1px; margin-right: -3px; }

.design { height: 97px; flex: none; background: #b2b2b2; position: relative; overflow: hidden; }
.ruler { position: absolute; inset: 0; width: 100%; height: 100%; }
.nums { font: 9px "Noto Sans", sans-serif; fill: #333; }
.veil-actions { position: relative; display: flex; justify-content: center; gap: 18px; padding-top: 31px; }
.veil-actions .ic { width: 32px; height: 32px; }

.sheet-area { flex: 1; min-height: 0; display: flex; border-top: 10px solid #dbdbdd; }
.sheet { flex: 1; min-width: 0; overflow: hidden; position: relative; background: #fff; }
table { width: 100%; table-layout: fixed; border-collapse: separate; border-spacing: 0; }
.c-head { width: 25px; }
th, td { padding: 0; border: solid #bfbfbf; border-width: 0 1px 1px 0; font-weight: normal; line-height: 1px; }
th { font: 10px/1px var(--mono); text-align: center; }
.last { border-right: 0; }
thead th { height: 20px; background: #fff; border-right-color: #d8d4da; padding-top: 3px; }
thead th span { display: flex; justify-content: center; }
thead .used { background: #cff0fc; }
thead .corner { background: var(--bg); }
.corner svg { width: 12px; height: 10px; display: block; margin: auto; }
tbody th { background: #e8e8e8; border-bottom-color: #d2d3d8; font-size: 11px; padding-top: 2px; }
tbody th.used { background: #cff0fc; }
.small { font: 10px/16px var(--mono); padding: 2px 0 0 2px; }
.sel { background: #eef5fe; color: #888; }
.huge { font: 40px/48px var(--mono); text-align: center; padding-top: 13px; }
.large { font: 36px/44px var(--mono); text-align: center; padding-top: 13px; }
.medium { font: 28px/48px var(--mono); padding-left: 14px; vertical-align: top; }
.txt { font: bold 12px/15px var(--mono); text-align: center; white-space: nowrap; }
.txt div { max-height: 70px; overflow: hidden; display: flow-root; }
.txt.cjk { font: bold 13px/15px var(--cjk); }
.txt.near { text-align: left; padding-left: 3px; }
.low { vertical-align: bottom; }
.over { position: absolute; inset: 0; width: 100%; height: 100%; }
.vbar { width: 17px; flex: none; display: flex; flex-direction: column; padding: 0 1px; }
.vbar button, .hbar button { background: #fff; width: 16px; height: 16px; }
.vbar .ic, .hbar .ic { width: 14px; height: 14px; }
.vbar i { background: #e1e1e1; flex: none; height: 73%; width: 15px; }
.vbar button:last-child { margin-top: auto; }
.vbar button:last-child .ic { width: 11px; height: 11px; }
.hbar { height: 17px; flex: none; display: flex; padding: 1px 0; }
.hbar i { background: #e1e1e1; width: calc(100% - 84px); margin-right: auto; }
.foot { height: 19px; flex: none; display: flex; align-items: center; }
.sheet-tab { width: 67px; height: 19px; background: #fff; font: 10px/16px var(--mono); color: #444; gap: 2px; padding-right: 3px; margin-right: 12px; }
.sheet-tab .ic { width: 10px; height: 12px; }
.add { margin-right: 8px; }
.add .ic { width: 22px; height: 16px; }
.foot .nav { margin-right: 20px; }
.foot .tri-right { margin-right: 15px; }
.slide { appearance: none; width: 214px; height: 12px; margin: 0 11px 0 4px; background: linear-gradient(#d9d9db, #d9d9db) 0 50% / 100% 1px no-repeat; }
.slide::-webkit-slider-thumb { appearance: none; width: 4px; height: 12px; border-radius: 2px; background: #333; }
.pct { width: 34px; height: 19px; margin: 0 4px 0 6px; border: 1px solid #d9dadd; padding: 0 3px; font: 12px/16px "Noto Sans", sans-serif; }
.unit { width: 10px; }

.rail { width: 40px; flex: none; background: #e8e8e8; display: flex; flex-direction: column; align-items: center; gap: 4px; padding-top: 8px; }
.rail .nav { margin-bottom: 9px; }
.rail button { width: 32px; height: 28px; }
.rail .on { background: var(--bg); }

.props { width: 246px; flex: none; padding: 0 10px; }
.props h2 { display: flex; justify-content: space-between; align-items: center; height: 27px; margin: 0 -10px 10px; padding: 0 6px 0 10px; border-bottom: 1px solid #d9dadd; }
.props h2 .ic { width: 12px; height: 12px; }
.field { display: flex; align-items: center; margin-bottom: 10px; }
.field label { width: 56px; flex: none; }
.field.short label { width: 44px; }
.field > input, .field .combo { flex: 1; min-width: 0; height: 20px; }
.field > input, .value { border: 1px solid #d9dadd; background: #fff; padding: 0 4px; }
#cell { font: 12px/16px "Liberation Sans", sans-serif; }
.value { width: 100%; height: 25px; font: 10px/16px var(--mono); }

.help { position: absolute; right: 48px; bottom: 47px; width: 36px; height: 36px; border-radius: 18px; background: #419bf9; color: #fff; font: 22px/36px "Noto Sans", sans-serif; }
.help i { position: absolute; right: 1px; top: -1px; width: 10px; height: 10px; border-radius: 5px; background: #ee1c24; border: 1px solid #fff; }
.tray-box { position: absolute; right: 0; bottom: 0; width: 28px; height: 34px; background: #2a2a2a; }
.tray-box .ic { width: 14px; height: 14px; }
</style>
